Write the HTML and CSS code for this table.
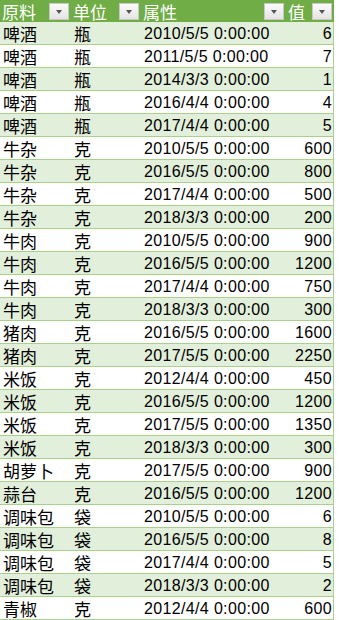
FILE: index.html
```html
<!DOCTYPE html>
<html lang="zh">
<head>
<meta charset="utf-8">
<link rel="stylesheet" href="styles.css">
</head>
<body>
<div class="sheet">
  <div class="row head">
    <div class="cell cjk">原料<span class="fbtn"></span></div>
    <div class="cell cjk">单位<span class="fbtn"></span></div>
    <div class="cell cjk">属性<span class="fbtn"></span></div>
    <div class="cell cjk">值<span class="fbtn"></span></div>
  </div>
  <div class="body">
    <div class="row"><div class="cell cjk">啤酒</div><div class="cell cjk">瓶</div><div class="cell date">2010/5/5 0:00:00</div><div class="cell num">6</div></div>
    <div class="row"><div class="cell cjk">啤酒</div><div class="cell cjk">瓶</div><div class="cell date">2011/5/5 0:00:00</div><div class="cell num">7</div></div>
    <div class="row"><div class="cell cjk">啤酒</div><div class="cell cjk">瓶</div><div class="cell date">2014/3/3 0:00:00</div><div class="cell num">1</div></div>
    <div class="row"><div class="cell cjk">啤酒</div><div class="cell cjk">瓶</div><div class="cell date">2016/4/4 0:00:00</div><div class="cell num">4</div></div>
    <div class="row"><div class="cell cjk">啤酒</div><div class="cell cjk">瓶</div><div class="cell date">2017/4/4 0:00:00</div><div class="cell num">5</div></div>
    <div class="row"><div class="cell cjk">牛杂</div><div class="cell cjk">克</div><div class="cell date">2010/5/5 0:00:00</div><div class="cell num">600</div></div>
    <div class="row"><div class="cell cjk">牛杂</div><div class="cell cjk">克</div><div class="cell date">2016/5/5 0:00:00</div><div class="cell num">800</div></div>
    <div class="row"><div class="cell cjk">牛杂</div><div class="cell cjk">克</div><div class="cell date">2017/4/4 0:00:00</div><div class="cell num">500</div></div>
    <div class="row"><div class="cell cjk">牛杂</div><div class="cell cjk">克</div><div class="cell date">2018/3/3 0:00:00</div><div class="cell num">200</div></div>
    <div class="row"><div class="cell cjk">牛肉</div><div class="cell cjk">克</div><div class="cell date">2010/5/5 0:00:00</div><div class="cell num">900</div></div>
    <div class="row"><div class="cell cjk">牛肉</div><div class="cell cjk">克</div><div class="cell date">2016/5/5 0:00:00</div><div class="cell num">1200</div></div>
    <div class="row"><div class="cell cjk">牛肉</div><div class="cell cjk">克</div><div class="cell date">2017/4/4 0:00:00</div><div class="cell num">750</div></div>
    <div class="row"><div class="cell cjk">牛肉</div><div class="cell cjk">克</div><div class="cell date">2018/3/3 0:00:00</div><div class="cell num">300</div></div>
    <div class="row"><div class="cell cjk">猪肉</div><div class="cell cjk">克</div><div class="cell date">2016/5/5 0:00:00</div><div class="cell num">1600</div></div>
    <div class="row"><div class="cell cjk">猪肉</div><div class="cell cjk">克</div><div class="cell date">2017/5/5 0:00:00</div><div class="cell num">2250</div></div>
    <div class="row"><div class="cell cjk">米饭</div><div class="cell cjk">克</div><div class="cell date">2012/4/4 0:00:00</div><div class="cell num">450</div></div>
    <div class="row"><div class="cell cjk">米饭</div><div class="cell cjk">克</div><div class="cell date">2016/5/5 0:00:00</div><div class="cell num">1200</div></div>
    <div class="row"><div class="cell cjk">米饭</div><div class="cell cjk">克</div><div class="cell date">2017/5/5 0:00:00</div><div class="cell num">1350</div></div>
    <div class="row"><div class="cell cjk">米饭</div><div class="cell cjk">克</div><div class="cell date">2018/3/3 0:00:00</div><div class="cell num">300</div></div>
    <div class="row"><div class="cell cjk">胡萝卜</div><div class="cell cjk">克</div><div class="cell date">2017/5/5 0:00:00</div><div class="cell num">900</div></div>
    <div class="row"><div class="cell cjk">蒜台</div><div class="cell cjk">克</div><div class="cell date">2016/5/5 0:00:00</div><div class="cell num">1200</div></div>
    <div class="row"><div class="cell cjk">调味包</div><div class="cell cjk">袋</div><div class="cell date">2010/5/5 0:00:00</div><div class="cell num">6</div></div>
    <div class="row"><div class="cell cjk">调味包</div><div class="cell cjk">袋</div><div class="cell date">2016/5/5 0:00:00</div><div class="cell num">8</div></div>
    <div class="row"><div class="cell cjk">调味包</div><div class="cell cjk">袋</div><div class="cell date">2017/4/4 0:00:00</div><div class="cell num">5</div></div>
    <div class="row"><div class="cell cjk">调味包</div><div class="cell cjk">袋</div><div class="cell date">2018/3/3 0:00:00</div><div class="cell num">2</div></div>
    <div class="row"><div class="cell cjk">青椒</div><div class="cell cjk">克</div><div class="cell date">2012/4/4 0:00:00</div><div class="cell num">600</div></div>
  </div>
</div>
</body>
</html>
```

FILE: styles.css
```css
html, body {
  margin: 0;
  padding: 0;
  background: #ffffff;
}

.sheet {
  width: 334px;
  font-family: "Liberation Sans", "Noto Sans CJK SC", sans-serif;
  font-size: 16px;
  color: #000000;
}

.row {
  display: grid;
  grid-template-columns: 71px 70px 145px 48px;
  height: 22px;
  border-bottom: 1px solid #a9d08e;
  box-sizing: content-box;
}

.body .row {
  border-right: 1px solid #a9d08e;
  width: 333px;
}

.body .row:nth-child(odd) {
  background: #e2efda;
}

.head {
  background: #70ad47;
  color: #ffffff;
  border-bottom: none;
  height: 22px;
}

.cell {
  display: flex;
  align-items: center;
  padding: 0 2px 0 3px;
  line-height: 21px;
  height: 22px;
  white-space: nowrap;
  box-sizing: border-box;
}

.cjk {
  font-size: 17px;
  font-family: "Noto Sans CJK SC", sans-serif;
  padding-top: 1px;
}

.head .cell {
  padding: 0 2px 0 2px;
  justify-content: space-between;
}

.date {
  letter-spacing: 0.35px;
  padding-top: 1px;
}

.num {
  justify-content: flex-end;
  padding-right: 2px;
  padding-top: 1px;
  letter-spacing: 0.35px;
}

.fbtn {
  position: relative;
  width: 20px;
  height: 17px;
  box-sizing: border-box;
  border: 1px solid #c8c8c8;
  background: linear-gradient(#fbfbfb, #e4e4e4);
  flex: none;
}

.fbtn::after {
  content: "";
  position: absolute;
  left: 6px;
  top: 6px;
  border-left: 3.5px solid transparent;
  border-right: 3.5px solid transparent;
  border-top: 4px solid #555555;
}
```
